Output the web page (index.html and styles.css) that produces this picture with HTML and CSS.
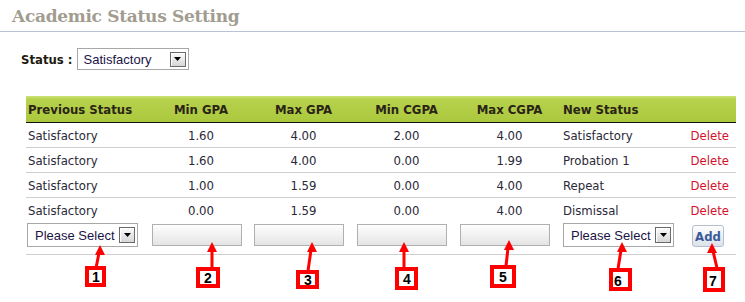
FILE: index.html
```html
<!DOCTYPE html>
<html lang="en">
<head>
    <meta charset="UTF-8">
    <title>Academic Status Setting</title>
    <link rel="stylesheet" href="styles.css">
</head>
<body>
    <div class="page">
        <h1 class="title">Academic Status Setting</h1>

        <div class="status-row">
            <span class="status-label">Status :</span>
            <div class="select select-status">
                <span class="select-text">Satisfactory</span>
                <span class="select-arrow"><svg width="7" height="4" viewBox="0 0 7 4"><path d="M0 0h7L3.5 4z" fill="#000"/></svg></span>
            </div>
        </div>

        <table class="rules">
            <colgroup>
                <col style="width:124px">
                <col style="width:102px">
                <col style="width:103px">
                <col style="width:103px">
                <col style="width:103px">
                <col style="width:119px">
                <col style="width:56px">
            </colgroup>
            <thead>
                <tr>
                    <th class="left">Previous Status</th>
                    <th>Min GPA</th>
                    <th>Max GPA</th>
                    <th>Min CGPA</th>
                    <th>Max CGPA</th>
                    <th class="left">New Status</th>
                    <th></th>
                </tr>
            </thead>
            <tbody>
                <tr>
                    <td class="left">Satisfactory</td>
                    <td>1.60</td>
                    <td>4.00</td>
                    <td>2.00</td>
                    <td>4.00</td>
                    <td class="left">Satisfactory</td>
                    <td class="action"><a class="delete">Delete</a></td>
                </tr>
                <tr>
                    <td class="left">Satisfactory</td>
                    <td>1.60</td>
                    <td>4.00</td>
                    <td>0.00</td>
                    <td>1.99</td>
                    <td class="left">Probation 1</td>
                    <td class="action"><a class="delete">Delete</a></td>
                </tr>
                <tr>
                    <td class="left">Satisfactory</td>
                    <td>1.00</td>
                    <td>1.59</td>
                    <td>0.00</td>
                    <td>4.00</td>
                    <td class="left">Repeat</td>
                    <td class="action"><a class="delete">Delete</a></td>
                </tr>
                <tr>
                    <td class="left">Satisfactory</td>
                    <td>0.00</td>
                    <td>1.59</td>
                    <td>0.00</td>
                    <td>4.00</td>
                    <td class="left">Dismissal</td>
                    <td class="action"><a class="delete">Delete</a></td>
                </tr>
                <tr class="add-row">
                    <td class="first">
                        <div class="select">
                            <span class="select-text">Please Select</span>
                            <span class="select-arrow"><svg width="7" height="4" viewBox="0 0 7 4"><path d="M0 0h7L3.5 4z" fill="#000"/></svg></span>
                        </div>
                    </td>
                    <td><input type="text" class="field"></td>
                    <td><input type="text" class="field"></td>
                    <td><input type="text" class="field"></td>
                    <td><input type="text" class="field"></td>
                    <td>
                        <div class="select">
                            <span class="select-text">Please Select</span>
                            <span class="select-arrow"><svg width="7" height="4" viewBox="0 0 7 4"><path d="M0 0h7L3.5 4z" fill="#000"/></svg></span>
                        </div>
                    </td>
                    <td class="add-cell"><button class="add-btn">Add</button></td>
                </tr>
            </tbody>
        </table>

        <!-- numbered callouts drawn over the form -->
        <svg class="callouts" width="745" height="302" viewBox="0 0 745 302">
            <g stroke="#f00" stroke-width="3" fill="none">
                <line x1="96" y1="268" x2="99" y2="253"/>
                <line x1="212" y1="268" x2="212" y2="250"/>
                <line x1="308" y1="271" x2="311" y2="250"/>
                <line x1="404" y1="268" x2="404" y2="250"/>
                <line x1="506" y1="266" x2="508" y2="248"/>
                <line x1="618" y1="269" x2="621" y2="250"/>
                <line x1="717" y1="268" x2="713" y2="251"/>
            </g>
            <g fill="#f00">
                <path d="M100 245l5 10h-10z"/>
                <path d="M212 242l5 10h-10z"/>
                <path d="M312 242l5 10h-10z"/>
                <path d="M404 242l5 10h-10z"/>
                <path d="M509 240l5 10h-10z"/>
                <path d="M622 242l5 10h-10z"/>
                <path d="M712 243l5 10h-10z"/>
            </g>
            <g stroke="#f00" stroke-width="4" fill="#fff">
                <rect x="87" y="268" width="17" height="17"/>
                <rect x="198" y="269" width="20" height="17"/>
                <rect x="298" y="272" width="19" height="15"/>
                <rect x="397" y="269" width="19" height="19"/>
                <rect x="492" y="267" width="22" height="19"/>
                <rect x="611" y="270" width="19" height="19"/>
                <rect x="705" y="269" width="18" height="21"/>
            </g>
            <g class="callout-num" text-anchor="middle">
                <text x="96" y="282">1</text>
                <text x="208" y="283">2</text>
                <text x="308" y="285">3</text>
                <text x="407" y="284">4</text>
                <text x="503" y="282">5</text>
                <text x="618" y="286">6</text>
                <text x="713" y="286">7</text>
            </g>
        </svg>
    </div>
</body>
</html>
```

FILE: styles.css
```css
body { margin: 0; background: #fff; font-family: "DejaVu Sans Condensed", "DejaVu Sans", sans-serif; font-size: 13px; color: #2a2838; }
.page { position: relative; width: 745px; height: 302px; overflow: hidden; }

.title { margin: 0; height: 32px; box-sizing: border-box; padding: 5px 12px 0; border-bottom: 1px solid #bac2d6; font-family: "DejaVu Serif", "Liberation Serif", serif; font-size: 17px; letter-spacing: -0.3px; line-height: 22px; font-weight: bold; color: #a29c90; }

.status-row { display: flex; align-items: center; margin-top: 16px; padding-left: 21px; gap: 4px; }
.status-label { font-weight: bold; color: #1e1a10; }

.select { display: flex; align-items: center; justify-content: space-between; box-sizing: border-box; width: 111px; height: 24px; border: 1px solid #a8a8a8; background: #fff; padding: 0 2px 0 7px; font-family: "Liberation Sans", Arial, sans-serif; font-size: 13px; color: #1b1446; }
.select-status { width: 112px; height: 22px; padding-left: 6px; }
.select-arrow { display: flex; align-items: center; justify-content: center; box-sizing: border-box; width: 16px; height: 16px; border: 1px solid #6a6a6a; background: linear-gradient(#fbfbfb, #d6d6d6); box-shadow: inset 1px 1px 0 #fff; }
.select-status .select-arrow { height: 15px; }

.rules { margin: 26px 0 0 26px; width: 710px; table-layout: fixed; border-collapse: collapse; }
.rules th { height: 26px; padding: 0 2px; background: linear-gradient(#cde57c 0, #b7d24d 3px, #aac83d 100%); border-bottom: 1px solid #111; font-weight: bold; color: #2b2416; text-align: center; }
.rules td { height: 24px; padding: 0 2px; text-align: center; border-top: 1px solid #cfcfcf; }
.rules tbody tr:first-child td { border-top: none; }
.rules tbody tr.add-row td { border-top: none; border-bottom: 1px solid #cfcfcf; height: 31px; padding-top: 1px; vertical-align: top; text-align: left; }
.rules .left { text-align: left; }
.rules td.action { text-align: right; padding-right: 7px; }
.rules td.first { padding-left: 1px; }
.delete { color: #d3102c; cursor: pointer; }

.field { display: block; box-sizing: border-box; width: 90px; height: 22px; margin: 1px 0 0; border: 1px solid #b0b0b0; background: linear-gradient(#fefefe, #e4e4e4); padding: 0; }
.rules tbody tr.add-row td.add-cell { text-align: center; }
.add-btn { box-sizing: border-box; width: 32px; height: 22px; margin-top: 2px; padding: 0; border: 1px solid #b6bdcb; border-radius: 3px; background: linear-gradient(#fefefe, #dce2ea); font-family: "DejaVu Sans Condensed", "DejaVu Sans", sans-serif; font-size: 13px; font-weight: bold; color: #3a5a98; cursor: pointer; }

.callouts { position: absolute; left: 0; top: 0; pointer-events: none; }
.callout-num { font-family: "Liberation Sans", Arial, sans-serif; font-size: 14px; font-weight: bold; fill: #000; }
```
